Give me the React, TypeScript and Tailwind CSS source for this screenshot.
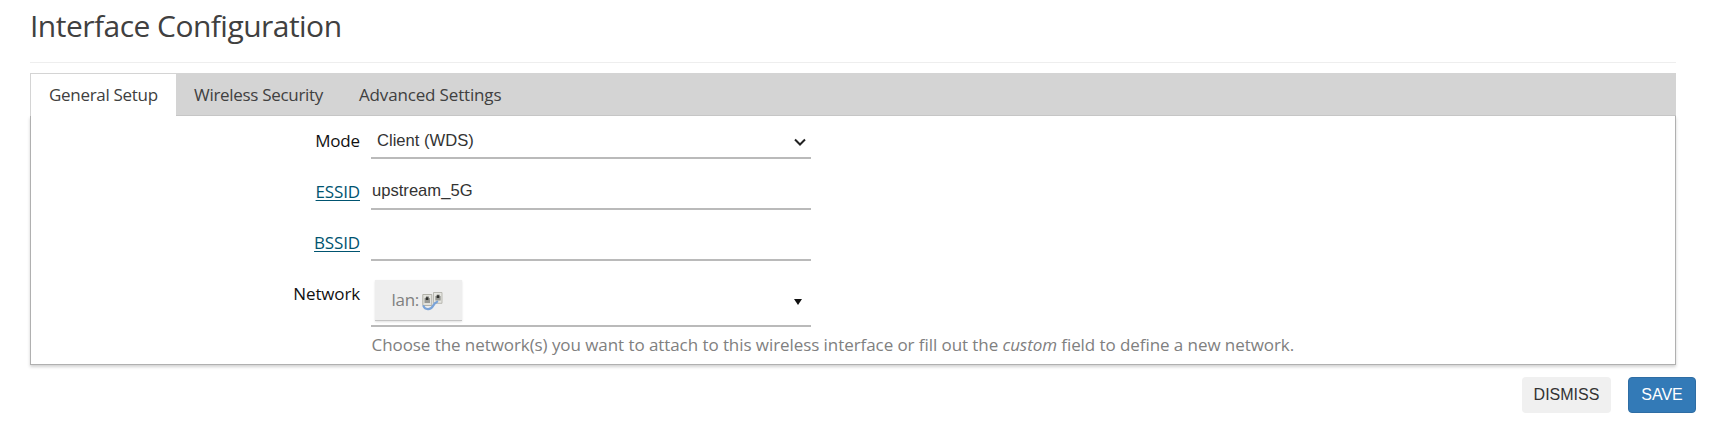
import type { ReactNode } from "react";

function Row({ label, link, children, className }: { label: string; link?: boolean; children: ReactNode; className: string }) {
  return (
    <div className={`flex ${className}`}>
      <div className="w-[329px] shrink-0 pt-px text-right leading-6 tracking-[-0.15px]">
        {link ? (
          <a className="text-[#005470] underline decoration-1 underline-offset-2" href="#">{label}</a>
        ) : (
          <span className="text-[#111]">{label}</span>
        )}
      </div>
      <div className="ml-[11px]">{children}</div>
    </div>
  );
}

function NetworkIcon() {
  return (
    <svg className="mt-px ml-[3px] h-5 w-[21px]" viewBox="0 0 21 20">
      <path d="M11.500 1.500h8.500v10.800h-8.500z" fill="#e6e6e1" stroke="#b3b3ac" strokeWidth=".9" />
      <path d="M.8 3.500h9v11H.8z" fill="#e2e2dc" stroke="#aaaaa2" strokeWidth=".9" />
      <path d="M2.500 7H4V5.300h2.800V7H8v5H2.500zM13.300 5h1.500V3.400h2.800V5H18.700v4.500H13.300z" fill="#989994" />
      <path d="M3.800 6.200h2.600v2.800H3.800zM14.700 4.200h2.600v2.800h-2.600z" fill="#30312e" />
      <path d="M1.500 15.200c1.800 4.300 7.500 3.300 9.200.2 1.300-2.500 2.300-3.900 4.500-4.700" fill="none" stroke="#79a3d8" strokeWidth="2.200" strokeLinecap="round" />
    </svg>
  );
}

export default function App() {
  return (
    <div className="h-[435px] w-full overflow-hidden bg-white font-['Open_Sans',sans-serif] text-[17px] tracking-[-0.3px] text-[#404040]">
      <div className="ml-[30px] w-[1646px]">
        <h4 className="h-[63px] border-b border-[#eee] pt-[6px] text-[30px] leading-10 tracking-[-0.53px]">
          <span className="whitespace-nowrap">Interface Configuration</span>
        </h4>
        <div className="mt-[10px] flex h-[43px] border-t border-l border-[#d4d4d4] bg-[#d4d4d4] leading-6">
          <div className="w-[145px] bg-white pt-[9px] pl-[18px] whitespace-nowrap">General Setup</div>
          <div className="w-[165px] border-b border-[#c6c6c6] pt-[9px] pl-[18px] whitespace-nowrap">Wireless Security</div>
          <div className="grow border-b border-[#c6c6c6] pt-[9px] pl-[18px] tracking-[-0.16px] whitespace-nowrap">Advanced Settings</div>
        </div>
        <div className="h-[249px] border-r border-b border-l border-[#b0b0b0] pt-[12px] shadow-[0_2px_3px_rgba(0,0,0,0.18)]">
          <Row label="Mode" className="h-[51px]">
            <div className="flex h-[31px] w-[440px] items-center justify-between border-b-2 border-[#bababa] pr-[5px] pb-[3px] pl-[6px] font-['Liberation_Sans',sans-serif] text-[16.6px] tracking-normal text-[#333]">
              <span>Client (WDS)</span>
              <svg className="mt-px h-[8px] w-[12px]" viewBox="0 0 12 8"><path d="m1 1.500 5 5 5-5" fill="none" stroke="#222" strokeWidth="2" /></svg>
            </div>
          </Row>
          <Row label="ESSID" link className="h-[51px]">
            <div className="flex h-[31px] w-[440px] items-center border-b-2 border-[#bababa] pb-[5px] pl-px font-['Liberation_Sans',sans-serif] text-[16.6px] tracking-normal text-[#333]">upstream_5G</div>
          </Row>
          <Row label="BSSID" link className="h-[51px]">
            <div className="h-[31px] w-[440px] border-b-2 border-[#bababa]" />
          </Row>
          <Row label="Network" className="">
            <div className="flex h-[46px] w-[440px] items-start justify-between border-b-2 border-[#bababa] pr-[9px] pl-[4px]">
              <div className="mt-[-1px] flex h-[41px] w-[87px] items-center border-b border-[#c4c4c4] bg-[#eee] pl-[16.5px] text-[#808080] shadow-[0_1px_2px_rgba(0,0,0,0.12)]">
                <span className="mt-[-1px]">lan:</span>
                <NetworkIcon />
              </div>
              <svg className="mt-[18px] h-[6px] w-[8px]" viewBox="0 0 8 6"><path d="M0 0h8L4 6z" fill="#111" /></svg>
            </div>
            <p className="mt-[6px] pl-[0.5px] leading-6 tracking-[-0.07px] whitespace-nowrap text-[#808080]">
              Choose the network(s) you want to attach to this wireless interface or fill out the <em>custom</em> field to define a new network.
            </p>
          </Row>
        </div>
      </div>
      <div className="mt-[12px] mr-[13px] flex justify-end gap-[17px] font-['Liberation_Sans',sans-serif] text-base tracking-normal">
        <button className="h-9 w-[89px] rounded-[4px] bg-[#f0f0f0] text-[#333]">DISMISS</button>
        <button className="h-9 w-[68px] rounded-[4px] border border-[#2e6da4] bg-[#337ab7] text-white">SAVE</button>
      </div>
    </div>
  );
}
